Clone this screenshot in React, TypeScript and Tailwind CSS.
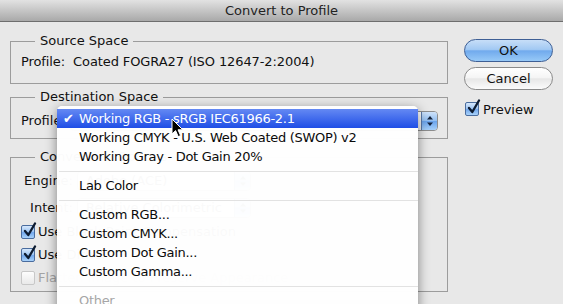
import clsx from 'clsx';

const AquaCheck = ({ checked, disabled }: { checked?: boolean; disabled?: boolean }) => (
  <span
    className={clsx(
      'relative inline-block h-[14px] w-[14px] shrink-0 rounded-[2px] border',
      disabled
        ? 'border-[#c8c8c8] bg-[linear-gradient(to_bottom,#fdfdfd,#e9e9e9)]'
        : 'border-[#4a6c9e] bg-[linear-gradient(to_bottom,#d6e8fc_0%,#a3c8f3_45%,#73a8ec_55%,#a9d2fa_100%)]'
    )}
  >
    {checked && (
      <svg className="absolute -top-[4px] left-[1px]" width="14" height="16" viewBox="0 0 14 16">
        <path d="M2 9 L5.3 13 L12 1.5" stroke="#0d1b30" strokeWidth="2.3" fill="none" strokeLinecap="round" strokeLinejoin="round" />
      </svg>
    )}
  </span>
);

const Arrows = () => (
  <svg width="8" height="12" viewBox="0 0 8 12">
    <path d="M4 1 L7 4.5 L1 4.5 Z" fill="#15233d" />
    <path d="M4 11 L7 7.5 L1 7.5 Z" fill="#15233d" />
  </svg>
);

const Popup = ({ label, className }: { label: string; className?: string }) => (
  <div
    className={clsx(
      'flex h-[20px] items-stretch overflow-hidden rounded-[4px] border border-[#8d8d8d] bg-[linear-gradient(to_bottom,#ffffff,#f1f1f1)]',
      className
    )}
  >
    <span className="flex flex-1 items-center pl-[8px]">{label}</span>
    <span className="flex w-[16px] items-center justify-center border-l border-[#5b7cae] bg-[linear-gradient(to_bottom,#cfe3fb_0%,#94c0f2_48%,#6ba4ec_52%,#a6d0fa_100%)]">
      <Arrows />
    </span>
  </div>
);

const Separator = () => (
  <div className="flex h-[10px] items-center pl-[2px]">
    <div className="h-px w-full bg-[#e2e2e2]" />
  </div>
);

const MenuItem = ({ children }: { children: string }) => (
  <div className="flex h-[19px] items-center pl-[22px] text-[#0a0a0a]">{children}</div>
);

export default function App() {
  return (
    <div className="relative h-[304px] w-[563px] overflow-hidden bg-[#e8e8e8] font-['DejaVu_Sans',sans-serif] text-[13px] leading-[16px] text-[#111]">
      <div className="flex h-[22px] items-center justify-center border-b border-[#6e6e6e] bg-[linear-gradient(to_bottom,#e2e2e2,#a9a9a9)] pt-[1px] text-[#222]">
        Convert to Profile
      </div>

      <div className="flex gap-[16px] pl-[10px] pt-[11px]">
        <div className="flex w-[438px] flex-col">
          <fieldset className="h-[51px] border border-[#9c9c9c] pl-[10px]">
            <legend className="ml-[14px] px-[5px]">Source Space</legend>
            <div className="mt-[5px] tracking-[-0.1px]">Profile:&nbsp; Coated FOGRA27 (ISO 12647-2:2004)</div>
          </fieldset>

          <fieldset className="mt-[5px] h-[50px] border border-[#9c9c9c] pl-[10px] pr-[9px]">
            <legend className="ml-[14px] px-[5px]">Destination Space</legend>
            <div className="mt-[6px] flex items-center gap-[4px]">
              <span>Profile:</span>
              <Popup label="Working RGB - sRGB IEC61966-2.1" className="flex-1" />
            </div>
          </fieldset>

          <fieldset className="mt-[10px] h-[143px] border border-[#9c9c9c] pl-[10px]">
            <legend className="ml-[14px] px-[5px]">Conversion Options</legend>
            <div className="mt-[6px] flex items-center gap-[4px]">
              <span className="w-[52px] text-right">Engine:</span>
              <Popup label="Adobe (ACE)" className="w-[174px]" />
            </div>
            <div className="mt-[7px] flex items-center gap-[4px]">
              <span className="w-[52px] text-right">Intent:</span>
              <Popup label="Relative Colorimetric" className="w-[174px]" />
            </div>
            <div className="mt-[5px] flex flex-col gap-[5px]">
              <div className="flex h-[18px] items-center gap-[3px]">
                <AquaCheck checked />
                <span>Use Black Point Compensation</span>
              </div>
              <div className="flex h-[18px] items-center gap-[3px]">
                <AquaCheck checked />
                <span>Use Dither</span>
              </div>
              <div className="flex h-[18px] items-center gap-[3px] text-[#a3a3a3]">
                <AquaCheck disabled />
                <span>Flatten Image to Preserve Appearance</span>
              </div>
            </div>
          </fieldset>
        </div>

        <div className="flex w-[89px] flex-col pt-[6px]">
          <button className="h-[23px] rounded-full border border-[#3e5f95] bg-[linear-gradient(to_bottom,#c7def8_0%,#a2c9f3_45%,#71aaed_52%,#97c9f7_100%)] text-[#111]">
            OK
          </button>
          <button className="mt-[5px] h-[23px] rounded-full border border-[#8a8a8a] bg-[linear-gradient(to_bottom,#ffffff_0%,#f5f5f5_45%,#e7e7e7_52%,#fbfbfb_100%)] text-[#111]">
            Cancel
          </button>
          <div className="mt-[10px] flex items-center gap-[4px] pl-[1px]">
            <AquaCheck checked />
            <span className="pt-[2px]">Preview</span>
          </div>
        </div>
      </div>

      <div className="absolute left-[57px] top-[106px] h-[220px] w-[361px] rounded-t-[5px] bg-white/[0.975] pt-[3px] tracking-[-0.3px] shadow-[0_3px_12px_rgba(0,0,0,0.45)]">
        <div className="relative flex h-[19px] items-center bg-[linear-gradient(to_bottom,#6489f3,#1f4ee6)] pl-[22px] text-white">
          <span className="absolute left-[6px] text-[13px]">✔</span>
          Working RGB - sRGB IEC61966-2.1
        </div>
        <MenuItem>Working CMYK - U.S. Web Coated (SWOP) v2</MenuItem>
        <MenuItem>Working Gray - Dot Gain 20%</MenuItem>
        <Separator />
        <MenuItem>Lab Color</MenuItem>
        <Separator />
        <MenuItem>Custom RGB...</MenuItem>
        <MenuItem>Custom CMYK...</MenuItem>
        <MenuItem>Custom Dot Gain...</MenuItem>
        <MenuItem>Custom Gamma...</MenuItem>
        <Separator />
        <div className="flex h-[19px] items-center pl-[22px] text-[#a6a6a6]">Other</div>
      </div>

      <svg className="absolute left-[171px] top-[118px]" width="14" height="21" viewBox="0 0 14 21">
        <path d="M1 1 L1 16 L4.6 12.6 L7.2 18.6 L9.6 17.6 L7 11.8 L11.8 11.8 Z" fill="#000" stroke="#fff" strokeWidth="1" strokeLinejoin="round" />
      </svg>
    </div>
  );
}
